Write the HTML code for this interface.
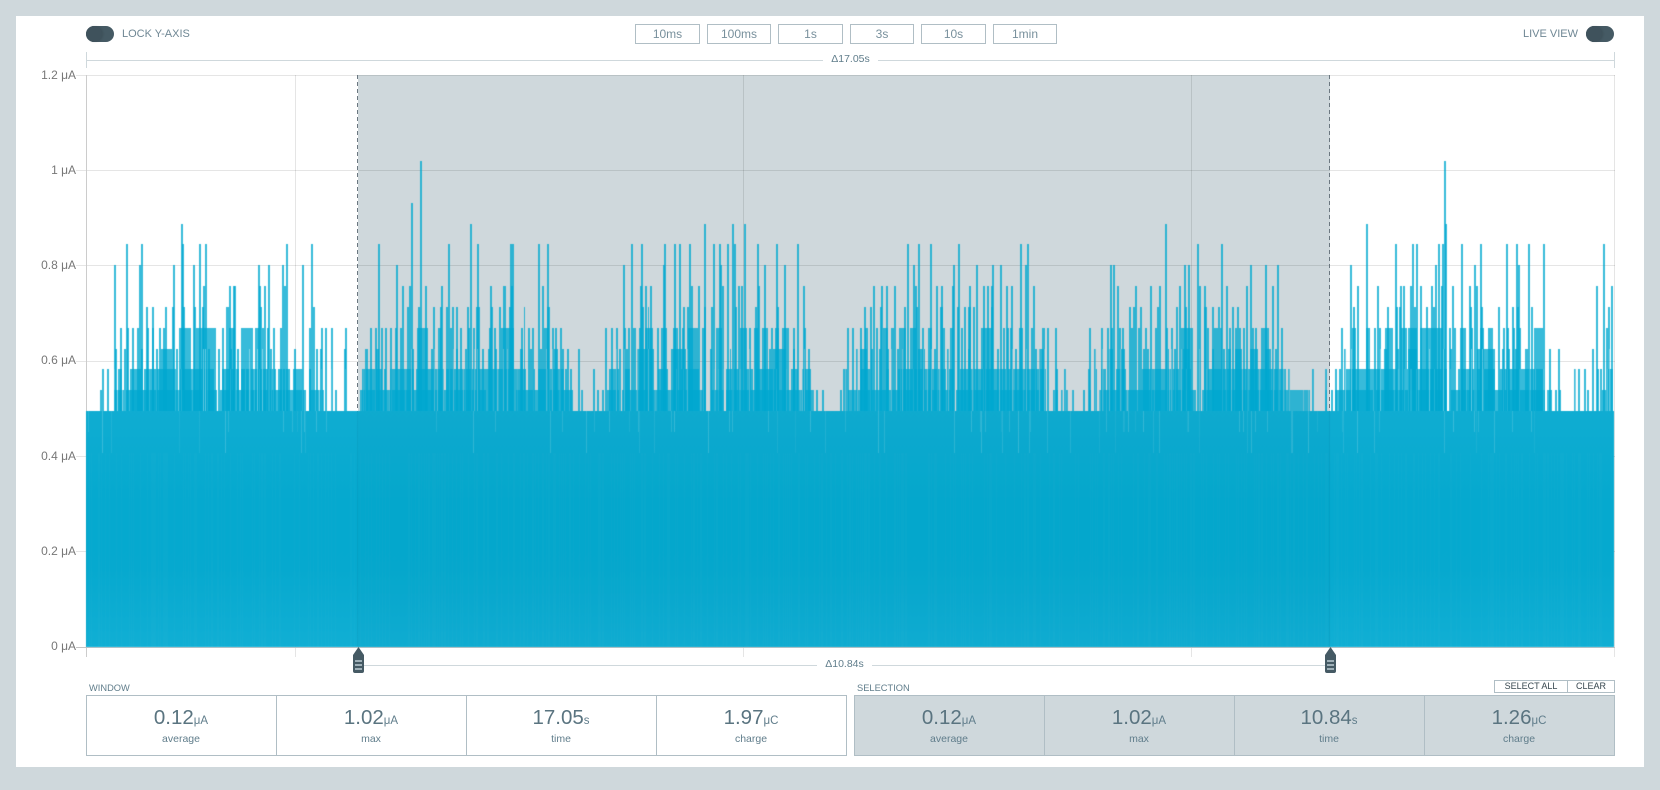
<!DOCTYPE html>
<html><head><meta charset="utf-8">
<style>
html,body{margin:0;padding:0;width:1660px;height:790px;overflow:hidden;background:#cfd8dc;font-family:"Liberation Sans",sans-serif}
#panel{position:absolute;left:16px;top:16px;width:1628px;height:751px;background:#fff}
.a{position:absolute;white-space:nowrap}
.btn{position:absolute;top:24px;height:18px;border:1px solid #b0bec5;color:#78909c;font-size:12px;line-height:18px;text-align:center;box-sizing:content-box}
.yl{position:absolute;right:1584px;font-size:12px;color:#777;line-height:14px;white-space:nowrap}
.tog{position:absolute;top:26px;width:28px;height:16px;border-radius:8px;background:#455a64}
.tog i{position:absolute;left:0;top:0;width:16px;height:16px;border-radius:8px;background:#3f525c;box-shadow:1px 0 2px rgba(0,0,0,.12)}
.cell{position:absolute;top:695px;height:61px;text-align:center;color:#546e7a}
.v{position:absolute;left:0;right:0;top:11px;font-size:20.5px;line-height:24px;color:#5a7480}
.v span{font-size:11.5px;color:#607d8b}
.l{position:absolute;left:0;right:0;top:38px;font-size:10.5px;line-height:13px;color:#607d8b}
.box{position:absolute;top:695px;height:59px;border:1px solid #b0bec5}
.lab{position:absolute;top:682px;font-size:9.3px;line-height:12px;color:#607d8b}
.sb{position:absolute;top:680px;height:11px;border:1px solid #b0bec5;font-size:9px;line-height:11px;color:#37474f;text-align:center;background:#fff}
.dl{position:absolute;font-size:10.5px;line-height:12px;color:#607d8b;background:#fff;text-align:center}
svg,canvas{position:absolute;left:0;top:0}
</style></head>
<body>
<div id="panel"></div>

<svg width="1660" height="790" viewBox="0 0 1660 790" shape-rendering="crispEdges">
  <rect x="358" y="75" width="972" height="572" fill="#cfd8dc"/>
  <g fill="rgba(0,0,0,.1)">
    <rect x="76" y="75" width="1539" height="1"/>
    <rect x="76" y="170" width="1539" height="1"/>
    <rect x="76" y="265" width="1539" height="1"/>
    <rect x="76" y="361" width="1539" height="1"/>
    <rect x="76" y="456" width="1539" height="1"/>
    <rect x="76" y="551" width="1539" height="1"/>
    <rect x="295" y="75" width="1" height="582"/>
    <rect x="743" y="75" width="1" height="582"/>
    <rect x="1191" y="75" width="1" height="582"/>
    <rect x="1614" y="75" width="1" height="582"/>
  </g>
  <rect x="86" y="75" width="1" height="582" fill="#ccc"/>
  <rect x="76" y="647" width="1539" height="1" fill="#c4c4c4"/>
  <!-- top range -->
  <rect x="86" y="60" width="1529" height="1" fill="#cfd8dc"/>
  <rect x="86" y="52" width="1" height="16" fill="#cfd8dc"/>
  <rect x="1614" y="52" width="1" height="16" fill="#cfd8dc"/>
  <!-- selection range -->
  <rect x="364" y="665" width="961" height="1" fill="#cfd8dc"/>
</svg>
<svg width="1660" height="790" viewBox="0 0 1660 790">
  <line x1="357.5" y1="75" x2="357.5" y2="647" stroke="#6b7780" stroke-width="1" stroke-dasharray="4 3"/>
  <line x1="1329.5" y1="75" x2="1329.5" y2="647" stroke="#6b7780" stroke-width="1" stroke-dasharray="4 3"/>
</svg>

<canvas id="c" width="1660" height="790"></canvas>

<svg width="1660" height="790" viewBox="0 0 1660 790">
  <g>
    <path d="M358.5 647 L364 655 V671 Q364 673 362 673 H355 Q353 673 353 671 V655 Z" fill="#455a64"/>
    <g fill="#9fb0b8"><rect x="355" y="660" width="7" height="2"/><rect x="355" y="664" width="7" height="2"/><rect x="355" y="668" width="7" height="2"/></g>
  </g>
  <g transform="translate(972,0)">
    <path d="M358.5 647 L364 655 V671 Q364 673 362 673 H355 Q353 673 353 671 V655 Z" fill="#455a64"/>
    <g fill="#9fb0b8"><rect x="355" y="660" width="7" height="2"/><rect x="355" y="664" width="7" height="2"/><rect x="355" y="668" width="7" height="2"/></g>
  </g>
</svg>

<div class="tog" style="left:86px"><i></i></div>
<div class="a" style="left:122px;top:27px;font-size:11px;line-height:14px;color:#6f8794">LOCK Y-AXIS</div>
<div class="a" style="left:1523px;top:27px;font-size:11px;line-height:14px;color:#6f8794">LIVE VIEW</div>
<div class="tog" style="left:1586px"><i></i></div>

<div class="btn" style="left:635px;width:63px">10ms</div>
<div class="btn" style="left:707px;width:62px">100ms</div>
<div class="btn" style="left:778px;width:63px">1s</div>
<div class="btn" style="left:850px;width:62px">3s</div>
<div class="btn" style="left:921px;width:63px">10s</div>
<div class="btn" style="left:993px;width:62px">1min</div>

<div class="dl" style="left:823px;top:53px;width:55px">Δ17.05s</div>
<div class="dl" style="left:817px;top:658px;width:55px">Δ10.84s</div>

<div class="yl" style="top:68px">1.2 μA</div>
<div class="yl" style="top:163px">1 μA</div>
<div class="yl" style="top:258px">0.8 μA</div>
<div class="yl" style="top:353px">0.6 μA</div>
<div class="yl" style="top:449px">0.4 μA</div>
<div class="yl" style="top:544px">0.2 μA</div>
<div class="yl" style="top:639px">0 μA</div>

<div class="lab" style="left:89px">WINDOW</div>
<div class="lab" style="left:857px">SELECTION</div>
<div class="sb" style="left:1494px;width:72px">SELECT ALL</div>
<div class="sb" style="left:1567px;width:46px">CLEAR</div>

<div class="box" style="left:86px;width:759px"></div>
<div class="box" style="left:854px;width:759px;background:#cfd8dc"></div>
<svg width="1660" height="790" viewBox="0 0 1660 790" shape-rendering="crispEdges">
  <g fill="#b0bec5">
    <rect x="276" y="695" width="1" height="61"/><rect x="466" y="695" width="1" height="61"/><rect x="656" y="695" width="1" height="61"/>
    <rect x="1044" y="695" width="1" height="61"/><rect x="1234" y="695" width="1" height="61"/><rect x="1424" y="695" width="1" height="61"/>
  </g>
</svg>

<div class="cell" style="left:86px;width:190px"><div class="v">0.12<span>μA</span></div><div class="l">average</div></div>
<div class="cell" style="left:276px;width:190px"><div class="v">1.02<span>μA</span></div><div class="l">max</div></div>
<div class="cell" style="left:466px;width:190px"><div class="v">17.05<span>s</span></div><div class="l">time</div></div>
<div class="cell" style="left:656px;width:190px"><div class="v">1.97<span>μC</span></div><div class="l">charge</div></div>
<div class="cell" style="left:854px;width:190px"><div class="v">0.12<span>μA</span></div><div class="l">average</div></div>
<div class="cell" style="left:1044px;width:190px"><div class="v">1.02<span>μA</span></div><div class="l">max</div></div>
<div class="cell" style="left:1234px;width:190px"><div class="v">10.84<span>s</span></div><div class="l">time</div></div>
<div class="cell" style="left:1424px;width:190px"><div class="v">1.26<span>μC</span></div><div class="l">charge</div></div>

<script>
(function(){
var ctx=document.getElementById('c').getContext('2d');
var Y={0:411,1:390,2:369,3:349,4:328,5:307,6:286,7:265,8:244,9:224,10:203,12:161};
var data=[
{o:86,min:0,max:1200,L:{
1:"45 84-115 120-392 402-660 668-714 747-753 822-1200",
2:"51 66 96-108 132-165 175-270 282-385 408-460 465-570 576-612 621-651 672 828-888 897 912-985 990-1075 1080-1200",
3:"90 117 165-171 213 225-258 273 366-372 399 435 453-459 555 627 693 705 777 837-846 870-879 981 1038 1110-1116 1137-1143 1188-1194",
4:"105 126 141 153-159 186 198-204 222 235 279-315 330-345 345-390 411 429-447 465-500 507-520 531 546 561-567 585 669-675 708 720 738 780 855 870 888 900 912-918 930 945 993-1026 1056-1065 1095 1125 1149 1164",
5:"183 201 240 261 294 327 351 420-429 525 684 966 999 1044 1065 1080-1086 1098-1104 1113 1146 1170-1182",
6:"354 432 444 447 522 537 597 951 972 1020 1068",
7:"87 162 264 324 519 549 591 651 933",
8:"123 168 291 342 360 603 678 879 1089 1176",
9:"288 1155",10:"978",12:"1005"}},
{o:486,min:0,max:1200,L:{
1:"90-260 288 336 351 363-400 408-650 675-715 720-985 993 1011 1065 1086-1200",
2:"0-120 144 155-235 240 255 321-327 369-400 414-432 516-546 585-640 720-760 780-800 810-880 915-936 948-975 1071-1083 1122-1155",
3:"9 30 102-110 135 165 204-216 231 246 279 402 423 453-504 555-600 675 732-735 849-855 861-900 924 969 1113 1122-1143 1158 1182",
4:"12 27 45-85 108 129 141 174-190 201 210 222-228 360 378 390-396 417 429 441-450 462 477-500 516 525-543 561-576 591 606-636 648-660 690-708 762-783 792 804-816 828-846 858 867-879 888-909 921-927 957 1086 1098-1104 1125 1137-1146 1173 1191-1200",
5:"18 42 72 114-117 183-192 471 486-490 594 606 654-660 678 750 810 876 1137 1155 1185",
6:"15 51-60 78 171 465 480 495 618 639 711 759 768 819 954 1164 1188",
7:"414 534 705 837 897",
8:"72-84 159 186 438 468 537 567 582 612 684 702 726 747 816 873 936",
9:"657 741 777"}},
{o:886,min:0,max:1200,L:{
1:"0-195 210-480 501-516 528 543 561 594 612 639-930 948-1200",
2:"0-9 36-180 190-205 222-360 366-375 381-480 507-516 537 609 630 645-660 690-720 768-880 885-915 966-1200",
3:"6 36 96-117 144-150 186 249 336 390 450 459-474 627 669-681 705-717 774 786 846-850 867 891-912 978-984 1014 1026-1035 1047-1068 1092-1116 1137-1155 1170",
4:"0-5 15-25 39-60 72-90 111 126-138 174 192-200 228 285-320 354 366 375 399-411 438 468-477 486 510 612 645-651 666 678 702 711 735-741 759 780 807-813 843 858 885-915 918 966 984-996 1005 1032 1050 1062 1074 1101 1110 1125-1149 1185-1191",
5:"57 93 162-171 216 237 246-255 264 318 732 744 765 816 870-876 900 954-963 981 999 1041 1056",
6:"3 27 90 153 168 201 252 294 306 315-321 363 378 444 696 750 792-798 822 882 942 957 1023 1083 1161",
7:"84 204 273 321 345 420 675 684 897 909 1092-1098 1140 1176",
8:"66 99 135 219 405 426 936 1008",
9:"840"}},
{o:1230,min:168,max:1150,L:{
1:"168-240 288 306 315-430 438-650 660-945 950-966 978 990 1074 1116-1128",
2:"177 249 288 318 327-333 348-500 531-652 684-795 810-870 873-915 918-940 1035 1047 1065 1104 1113 1134-1150",
3:"345 462-470 504 534-560 642 663 741-795 819 837 858 885-894 960 987 1086-1092",
4:"336 366-378 408-420 435 447-453 465-490 513-530 534-560 570-640 660 672-678 690-708 726 750-762 774-789 822 834 852 870 912-938 1131",
5:"372 474 501 510 552-558 591 612 723 756 807 849 864 906 1137",
6:"384 444 513 522 543 573 606 636 669 720 741 1101 1146",
7:"363 618 735 867",
8:"498 549 561 627 639 696 753 831 861 897 942 1122",
9:"411 648",12:"645"}}
];
/* spikes / bands */
ctx.fillStyle='rgba(0,168,208,.78)';
for(var d=0;d<data.length;d++){
  var z=data[d];
  for(var k in z.L){
    var items=z.L[k].split(' ');
    for(var i=0;i<items.length;i++){
      var p=items[i].split('-'),a,b;
      if(p.length==2){a=+p[0];b=+p[1];}else{a=+p[0]-3;b=+p[0]+3;}
      if(a<z.min)a=z.min; if(b>z.max)b=z.max;
      if(b<=a)continue;
      var x0=Math.round(z.o+a/3),x1=Math.round(z.o+b/3);
      if(x1<=x0)x1=x0+1;
      if(x1>1614)x1=1614;
      ctx.fillRect(x0,Y[k],x1-x0,412-Y[k]);
    }
  }
}
var s=12345;
function r(){s=(s*1664525+1013904223)%4294967296;return s/4294967296;}
/* thin translucent gaps through the dense bands */
ctx.globalCompositeOperation='destination-out';
for(var x=86;x<1614;x++){
  var t=r();
  if(t<.05){ctx.fillStyle='rgba(0,0,0,.35)';ctx.fillRect(x,349,1,62);}
  else if(t<.15){ctx.fillStyle='rgba(0,0,0,.12)';ctx.fillRect(x,369,1,42);}
}
ctx.globalCompositeOperation='source-over';
/* solid lower body */
var g=ctx.createLinearGradient(0,411,0,647);
g.addColorStop(0,'#10add2');g.addColorStop(.4,'#05a9cf');g.addColorStop(.65,'#06a9cf');g.addColorStop(1,'#11afd4');
ctx.fillStyle=g;
ctx.fillRect(86,411,1528,236);
/* slits in the solid body */
for(var x=86;x<1614;x++){
  var t=r();
  if(t<.06){
    ctx.fillStyle='rgba(255,255,255,'+(.05+r()*.13)+')';
    var h=21+Math.floor(r()*2)*21;
    ctx.fillRect(x,411,1,h);
  }
  if(t>.7){
    ctx.fillStyle='rgba(255,255,255,.02)';
    ctx.fillRect(x,453,1,194);
  }
}
/* selection slightly darker */
ctx.fillStyle='rgba(0,70,100,.025)';
ctx.fillRect(358,411,972,236);
/* faint selection edges through the solid body */
ctx.fillStyle='rgba(0,90,120,.1)';
ctx.fillRect(357,411,1,236);
ctx.fillRect(1329,411,1,236);
})();
</script>
</body></html>
